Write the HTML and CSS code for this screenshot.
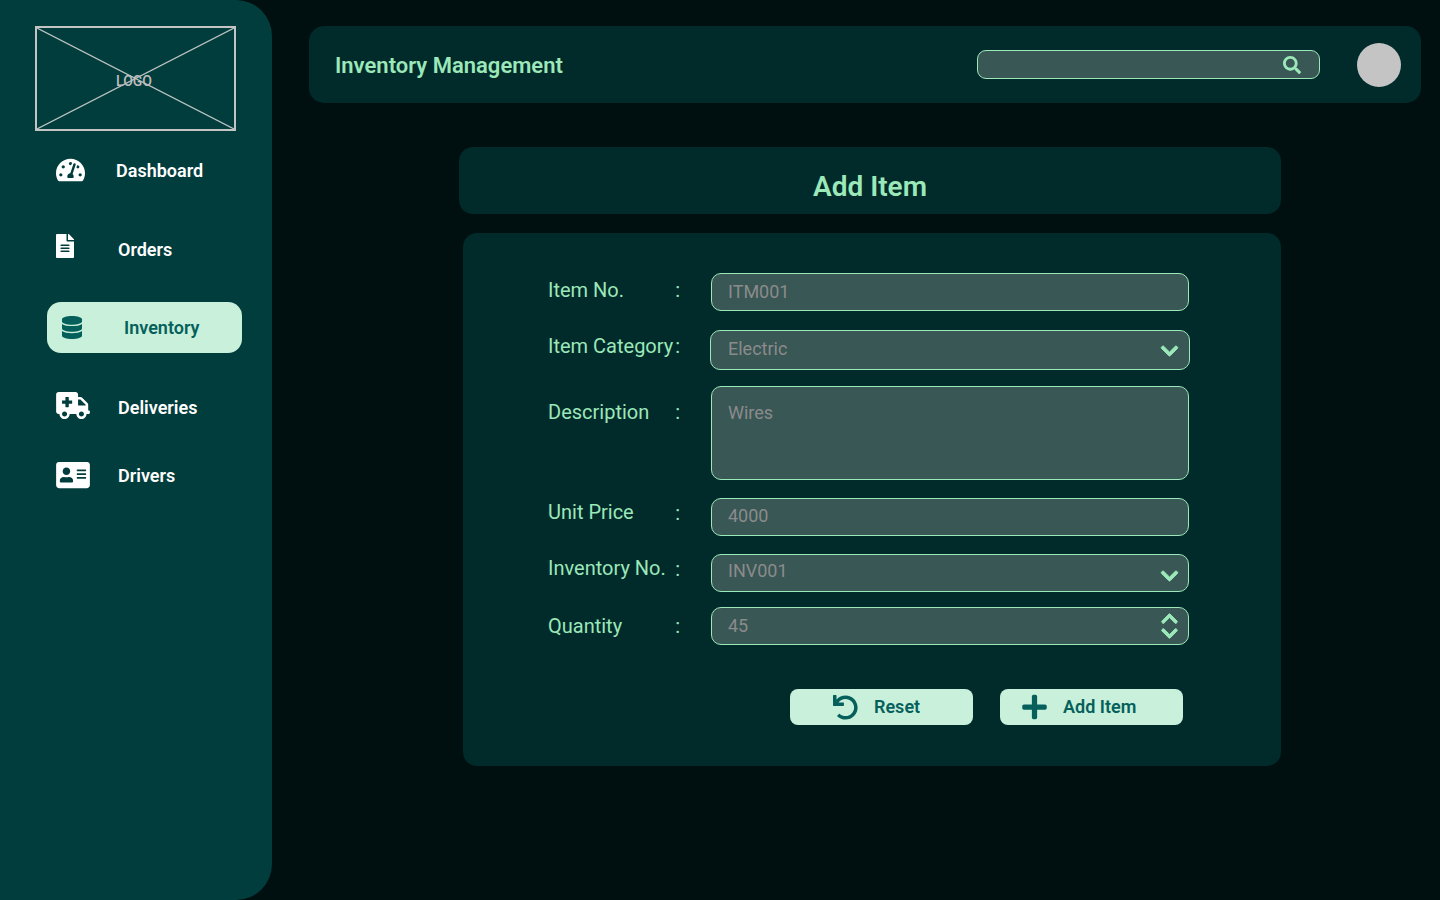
FILE: index.html
```html
<!DOCTYPE html>
<html lang="en">
<head>
<meta charset="utf-8">
<title>Inventory Management</title>
<link rel="stylesheet" href="styles.css">
</head>
<body>
<aside class="sidebar">
  <div class="logo">
    <svg class="logo-cross" viewBox="0 0 197 101" preserveAspectRatio="none"><path d="M0 0L197 101M197 0L0 101"/></svg>
    <span class="logo-text">LOGO</span>
  </div>
  <nav class="nav">
    <a class="nav-item nav-dashboard">
      <svg class="ic-dash" viewBox="0 0 576 512"><path d="M288 32C128.94 32 0 160.94 0 320c0 52.8 14.25 102.26 39.06 144.8 5.61 9.62 16.3 15.2 27.44 15.2h443c11.14 0 21.83-5.58 27.44-15.2C561.75 422.26 576 372.8 576 320c0-159.06-128.94-288-288-288zm0 64c14.71 0 26.58 10.13 30.32 23.65-1.11 2.26-2.64 4.23-3.45 6.67l-9.22 27.67c-5.13 3.49-10.97 6.01-17.64 6.01-17.67 0-32-14.33-32-32S270.33 96 288 96zM96 384c-17.67 0-32-14.33-32-32s14.33-32 32-32 32 14.33 32 32-14.33 32-32 32zm48-160c-17.67 0-32-14.33-32-32s14.33-32 32-32 32 14.33 32 32-14.33 32-32 32zm246.77-72.41l-61.33 184C343.13 347.33 352 364.54 352 384c0 11.72-3.38 22.55-8.88 32H232.88c-5.5-9.45-8.88-20.28-8.88-32 0-33.94 26.5-61.43 59.9-63.59l61.34-184.01c4.17-12.56 17.73-19.45 30.36-15.17 12.57 4.19 19.35 17.79 15.17 30.36zm14.66 57.2l15.52-46.55c3.47-1.29 7.13-2.23 11.05-2.23 17.67 0 32 14.33 32 32s-14.33 32-32 32c-11.38-.01-20.89-6.28-26.57-15.22zM480 384c-17.67 0-32-14.33-32-32s14.33-32 32-32 32 14.33 32 32-14.33 32-32 32z"/></svg>
      <span>Dashboard</span>
    </a>
    <a class="nav-item nav-orders">
      <svg class="ic-file" viewBox="0 0 384 512"><path d="M224 136V0H24C10.7 0 0 10.7 0 24v464c0 13.3 10.7 24 24 24h336c13.3 0 24-10.7 24-24V160H248c-13.2 0-24-10.8-24-24zm64 236c0 6.6-5.4 12-12 12H108c-6.6 0-12-5.4-12-12v-8c0-6.6 5.4-12 12-12h168c6.6 0 12 5.4 12 12v8zm0-64c0 6.6-5.4 12-12 12H108c-6.6 0-12-5.4-12-12v-8c0-6.6 5.4-12 12-12h168c6.6 0 12 5.4 12 12v8zm0-72v8c0 6.6-5.4 12-12 12H108c-6.6 0-12-5.4-12-12v-8c0-6.6 5.4-12 12-12h168c6.6 0 12 5.4 12 12zm96-114.1v6.1H256V0h6.1c6.4 0 12.5 2.5 17 7l97.9 98c4.5 4.5 7 10.6 7 16.9z"/></svg>
      <span>Orders</span>
    </a>
    <a class="nav-item nav-inventory">
      <svg class="ic-db" viewBox="0 0 448 512"><path d="M448 73.143v45.714C448 159.143 347.667 192 224 192S0 159.143 0 118.857V73.143C0 32.857 100.333 0 224 0s224 32.857 224 73.143zM448 176v102.857C448 319.143 347.667 352 224 352S0 319.143 0 278.857V176c48.125 33.143 136.208 48.572 224 48.572S399.874 209.143 448 176zm0 160v102.857C448 479.143 347.667 512 224 512S0 479.143 0 438.857V336c48.125 33.143 136.208 48.572 224 48.572S399.874 369.143 448 336z"/></svg>
      <span>Inventory</span>
    </a>
    <a class="nav-item nav-deliveries">
      <svg class="ic-amb" viewBox="0 0 640 512"><path d="M624 352h-16V243.9c0-12.7-5.1-24.9-14.1-33.9L494 110.1c-9-9-21.2-14.1-33.9-14.1H416V48c0-26.5-21.5-48-48-48H48C21.5 0 0 21.5 0 48v320c0 26.5 21.5 48 48 48h16c0 53 43 96 96 96s96-43 96-96h128c0 53 43 96 96 96s96-43 96-96h48c8.8 0 16-7.2 16-16v-32c0-8.8-7.2-16-16-16zM160 464c-26.5 0-48-21.5-48-48s21.5-48 48-48 48 21.5 48 48-21.5 48-48 48zm144-248c0 4.4-3.6 8-8 8h-56v56c0 4.4-3.6 8-8 8h-48c-4.4 0-8-3.6-8-8v-56h-56c-4.4 0-8-3.6-8-8v-48c0-4.4 3.6-8 8-8h56v-56c0-4.4 3.6-8 8-8h48c4.4 0 8 3.6 8 8v56h56c4.4 0 8 3.6 8 8v48zm176 248c-26.5 0-48-21.5-48-48s21.5-48 48-48 48 21.5 48 48-21.5 48-48 48zm80-208H416V144h44.1l99.9 99.9V256z"/></svg>
      <span>Deliveries</span>
    </a>
    <a class="nav-item nav-drivers">
      <svg class="ic-card" viewBox="0 0 576 512"><path d="M528 32H48C21.5 32 0 53.5 0 80v352c0 26.5 21.5 48 48 48h480c26.5 0 48-21.5 48-48V80c0-26.5-21.5-48-48-48zm-352 96c35.3 0 64 28.7 64 64s-28.7 64-64 64-64-28.7-64-64 28.7-64 64-64zm112 236.8c0 10.6-10 19.2-22.4 19.2H86.4C74 384 64 375.4 64 364.8v-19.2c0-31.8 30.1-57.6 67.2-57.6h5c12.3 5.1 25.7 8 39.8 8s27.6-2.9 39.8-8h5c37.1 0 67.2 25.8 67.2 57.6v19.2zM512 312c0 4.4-3.6 8-8 8H360c-4.4 0-8-3.6-8-8v-16c0-4.4 3.6-8 8-8h144c4.4 0 8 3.6 8 8v16zm0-64c0 4.4-3.6 8-8 8H360c-4.4 0-8-3.6-8-8v-16c0-4.4 3.6-8 8-8h144c4.4 0 8 3.6 8 8v16zm0-64c0 4.4-3.6 8-8 8H360c-4.4 0-8-3.6-8-8v-16c0-4.4 3.6-8 8-8h144c4.4 0 8 3.6 8 8v16z"/></svg>
      <span>Drivers</span>
    </a>
  </nav>
</aside>
<main class="main">
  <header class="topbar">
    <h1 class="app-title">Inventory Management</h1>
    <div class="search">
      <svg class="ic-search" viewBox="0 0 512 512"><path d="M505 442.7L405.3 343c-4.5-4.5-10.6-7-17-7H372c27.6-35.3 44-79.7 44-128C416 93.1 322.9 0 208 0S0 93.1 0 208s93.1 208 208 208c48.3 0 92.7-16.4 128-44v16.3c0 6.4 2.5 12.5 7 17l99.7 99.7c9.4 9.4 24.6 9.4 33.9 0l28.3-28.3c9.4-9.4 9.4-24.6.1-34zM208 336c-70.7 0-128-57.2-128-128 0-70.7 57.2-128 128-128 70.7 0 128 57.2 128 128 0 70.7-57.2 128-128 128z"/></svg>
    </div>
    <div class="avatar"></div>
  </header>
  <div class="title-panel"><h2 class="page-title">Add Item</h2></div>
  <form class="form-panel">
    <div class="row row-no">
      <label class="label"><span>Item No.</span><span>:</span></label>
      <div class="field field-input">ITM001</div>
    </div>
    <div class="row row-cat">
      <label class="label"><span>Item Category</span><span>:</span></label>
      <div class="field field-select">Electric
        <svg class="chev" viewBox="0 0 448 512"><path d="M207.029 381.476L12.686 187.132c-9.373-9.373-9.373-24.569 0-33.941l22.667-22.667c9.357-9.357 24.522-9.375 33.901-.04L224 284.505l154.745-154.021c9.379-9.335 24.544-9.317 33.901.04l22.667 22.667c9.373 9.373 9.373 24.569 0 33.941L240.971 381.476c-9.373 9.372-24.569 9.372-33.942 0z"/></svg>
      </div>
    </div>
    <div class="row row-desc">
      <label class="label"><span>Description</span><span>:</span></label>
      <div class="field field-area">Wires</div>
    </div>
    <div class="row row-price">
      <label class="label"><span>Unit Price</span><span class="colon-low">:</span></label>
      <div class="field field-price">4000</div>
    </div>
    <div class="row row-inv">
      <label class="label"><span>Inventory No.</span><span class="colon-low">:</span></label>
      <div class="field field-inv">INV001
        <svg class="chev" viewBox="0 0 448 512"><path d="M207.029 381.476L12.686 187.132c-9.373-9.373-9.373-24.569 0-33.941l22.667-22.667c9.357-9.357 24.522-9.375 33.901-.04L224 284.505l154.745-154.021c9.379-9.335 24.544-9.317 33.901.04l22.667 22.667c9.373 9.373 9.373 24.569 0 33.941L240.971 381.476c-9.373 9.372-24.569 9.372-33.942 0z"/></svg>
      </div>
    </div>
    <div class="row row-qty">
      <label class="label"><span>Quantity</span><span>:</span></label>
      <div class="field field-input">45
        <svg class="updown" viewBox="0 0 448 720"><path d="M240.971 30.524l194.343 194.343c9.373 9.373 9.373 24.569 0 33.941l-22.667 22.667c-9.357 9.357-24.522 9.375-33.901.04L224 127.495 69.255 281.516c-9.379 9.335-24.544 9.317-33.901-.04l-22.667-22.667c-9.373-9.373-9.373-24.569 0-33.941L207.03 30.525c9.372-9.373 24.568-9.373 33.941-.001z"/><path d="M207.029 691.476L12.686 497.132c-9.373-9.373-9.373-24.569 0-33.941l22.667-22.667c9.357-9.357 24.522-9.375 33.901-.04L224 594.505l154.745-154.021c9.379-9.335 24.544-9.317 33.901.04l22.667 22.667c9.373 9.373 9.373 24.569 0 33.941L240.971 691.476c-9.373 9.372-24.569 9.372-33.942 0z"/></svg>
      </div>
    </div>
    <div class="actions">
      <button class="btn btn-reset" type="button">
        <svg class="ic-undo" viewBox="0 0 512 512"><path d="M212.333 224.333H12c-6.627 0-12-5.373-12-12V12C0 5.373 5.373 0 12 0h48c6.627 0 12 5.373 12 12v78.112C117.773 39.279 184.26 7.47 258.175 8.007c136.906.994 246.448 111.623 246.157 248.532C504.041 393.258 393.12 504 256.333 504c-64.089 0-122.496-24.313-166.51-64.215-5.099-4.622-5.334-12.554-.467-17.42l33.967-33.967c4.474-4.474 11.662-4.717 16.401-.525C170.76 415.336 211.58 432 256.333 432c97.268 0 176-78.716 176-176 0-97.267-78.716-176-176-176-58.496 0-110.28 28.476-142.274 72.333h98.274c6.627 0 12 5.373 12 12v48c0 6.627-5.373 12-12 12z"/></svg>
        <span class="btn-text">Reset</span>
      </button>
      <button class="btn btn-add" type="button">
        <svg class="ic-plus" viewBox="0 0 448 512"><path d="M416 208H272V64c0-17.67-14.33-32-32-32h-32c-17.67 0-32 14.33-32 32v144H32c-17.67 0-32 14.33-32 32v32c0 17.67 14.33 32 32 32h144v144c0 17.67 14.33 32 32 32h32c17.67 0 32-14.33 32-32V304h144c17.67 0 32-14.33 32-32v-32c0-17.67-14.33-32-32-32z"/></svg>
        <span class="btn-text">Add Item</span>
      </button>
    </div>
  </form>
</main>
</body>
</html>
```
FILE: styles.css
```css
* { box-sizing: border-box; }
html, body { margin: 0; height: 100%; }
body {
  display: flex;
  height: 900px;
  overflow: hidden;
  background: #000f0f;
  font-family: Roboto, "Liberation Sans", sans-serif;
}
svg { display: block; fill: currentColor; flex: none; }

/* sidebar */
.sidebar {
  width: 272px;
  flex: none;
  height: 900px;
  background: #023d3d;
  border-radius: 0 36px 36px 0;
  padding: 26px 0 0 35px;
}
.logo {
  position: relative;
  width: 201px;
  height: 105px;
  border: 2px solid #c4c4c4;
  display: flex;
  align-items: center;
  justify-content: center;
}
.logo-cross { position: absolute; inset: 0; width: 100%; height: 100%; fill: none; }
.logo-cross path { stroke: #bcc4c1; stroke-width: 1.2; vector-effect: non-scaling-stroke; }
.logo-text { position: relative; color: #bdbdbd; font-size: 14px; font-weight: 500; margin-top: 5px; margin-right: 3px; }
.nav { display: flex; flex-direction: column; margin: 14px 0 0 -35px; }
.nav-item {
  display: flex;
  align-items: center;
  height: 51px;
  padding-left: 56px;
  color: #fff;
  font-size: 18px;
  font-weight: 600;
}
.nav-orders { margin-top: 28px; }
.nav-inventory {
  margin: 27px 30px 0 47px;
  padding-left: 15px;
  background: #c9f0da;
  color: #05605c;
  border-radius: 14px;
}
.nav-deliveries { margin-top: 28px; }
.nav-deliveries span { margin-top: 2px; }
.nav-drivers { margin-top: 18px; }
.ic-dash { width: 29px; height: 26px; margin: 0 31px 2px 0; }
.ic-file { width: 18px; height: 24px; margin: 0 44px 8px 0; }
.ic-db { width: 20px; height: 23px; margin-right: 42px; }
.ic-amb { width: 34px; height: 27px; margin: 0 28px 3px 0; }
.ic-card { width: 34px; height: 30px; margin: 0 28px 1px 0; }

/* main */
.main { flex: 1; padding: 26px 19px 0 37px; }
.topbar {
  display: flex;
  align-items: center;
  height: 77px;
  padding: 0 20px 0 26px;
  background: #012a2b;
  border-radius: 15px;
}
.app-title { margin: 2px 0 0; color: #9be8b9; font-size: 22px; font-weight: 600; }
.search {
  position: relative;
  width: 343px;
  height: 29px;
  margin-left: auto;
  background: #395755;
  border: 1px solid #9be8b9;
  border-radius: 9px;
}
.ic-search { position: absolute; top: 5px; right: 18px; width: 18px; height: 18px; color: #9be8b9; }
.avatar { width: 44px; height: 44px; margin-left: 37px; border-radius: 50%; background: #c4c4c4; }

.title-panel {
  width: 822px;
  height: 67px;
  margin: 44px 0 0 150px;
  padding-top: 12px;
  display: flex;
  align-items: center;
  justify-content: center;
  background: #012a2b;
  border-radius: 14px;
}
.page-title { margin: 0; color: #9be8b9; font-size: 28px; font-weight: 600; }

.form-panel {
  width: 818px;
  height: 533px;
  margin: 19px 0 0 154px;
  padding: 40px 0 0 85px;
  background: #012a2b;
  border-radius: 14px;
}
.row { display: flex; align-items: flex-start; }
.label {
  display: flex;
  justify-content: space-between;
  width: 132px;
  margin-right: 31px;
  color: #9be8b9;
  font-size: 20px;
  line-height: 24px;
}
.colon-low { margin-top: 1px; }
.field {
  position: relative;
  width: 478px;
  height: 38px;
  padding: 0 16px;
  background: #395755;
  border: 1px solid #9be8b9;
  border-radius: 10px;
  color: #8b8b8b;
  font-size: 18px;
  line-height: 36px;
}
.field-select { width: 480px; height: 40px; margin-left: -1px; padding-left: 17px; line-height: 35px; }
.field-area { height: 94px; line-height: 24px; padding-top: 14px; }
.field-price { line-height: 34px; }
.field-inv { line-height: 32px; }
.row-no .label { margin-top: 5px; }
.row-cat { margin-top: 19px; }
.row-cat .label { margin-top: 4px; }
.row-desc { margin-top: 16px; }
.row-desc .label { margin-top: 14px; }
.row-price { margin-top: 18px; }
.row-price .label { margin-top: 2px; }
.row-inv { margin-top: 18px; }
.row-inv .label { margin-top: 2px; }
.row-qty { margin-top: 15px; }
.row-qty .label { margin-top: 7px; }
.chev { position: absolute; right: 10px; top: 11px; width: 17px; height: 20px; color: #9be8b9; stroke: currentColor; stroke-width: 26; overflow: visible; }
.field-select .chev { top: 10px; right: 11px; }
.updown { position: absolute; right: 10px; top: 5px; width: 17px; height: 26px; color: #9be8b9; stroke: currentColor; stroke-width: 26; overflow: visible; }

.actions { display: flex; gap: 27px; margin: 44px 0 0 242px; }
.btn {
  display: flex;
  align-items: center;
  width: 183px;
  height: 36px;
  padding: 0;
  border: 0;
  border-radius: 8px;
  background: #c9f0da;
  color: #05605c;
  font-family: inherit;
  font-size: 18px;
  font-weight: 600;
}
.btn-text { margin-bottom: 2px; }
.ic-undo { width: 25px; height: 25px; margin: 0 16px 0 43px; }
.ic-plus { width: 25px; height: 28px; margin: 0 16px 0 22px; }
```
